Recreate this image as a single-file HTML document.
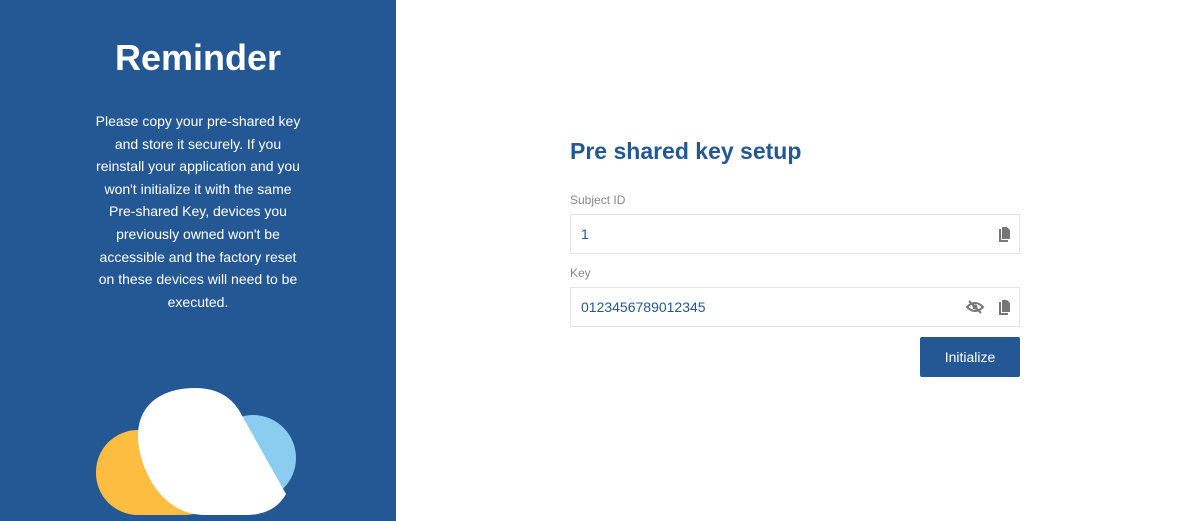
<!DOCTYPE html>
<html><head><style>
body{margin:0;width:1191px;height:521px;overflow:hidden;font-family:"Liberation Sans",sans-serif;background:#fff;position:relative}
.left{position:absolute;left:0;top:0;width:396px;height:521px;background:#245895;color:#fff;text-align:center}
h1{position:absolute;top:37px;left:0;width:396px;margin:0;font-size:36px;font-weight:bold}
.txt{position:absolute;top:110px;left:48px;width:300px;font-size:14px;line-height:22.6px;white-space:nowrap}
h2{position:absolute;left:570px;top:138px;margin:0;color:#245895;font-size:23px;font-weight:bold}
.lbl{position:absolute;left:570px;font-size:12px;color:#888}
.inp{position:absolute;left:570px;width:448px;height:38px;border:1px solid #e3e3e3;font-size:14px;color:#245895;line-height:38px;text-indent:10px;box-sizing:content-box}
.btn{position:absolute;left:920px;top:337px;width:100px;height:40px;background:#245895;color:#fff;font-size:14px;text-align:center;line-height:40px;border-radius:2px}
.ic{position:absolute;fill:#777}
</style></head><body>
<div class="left">
<h1>Reminder</h1>
<div class="txt">Please copy your pre-shared key<br>and store it securely. If you<br>reinstall your application and you<br>won't initialize it with the same<br>Pre-shared Key, devices you<br>previously owned won't be<br>accessible and the factory reset<br>on these devices will need to be<br>executed.</div>
<svg style="position:absolute;left:0;top:0" width="396" height="521">
<rect x="96" y="430" width="130" height="85" rx="42" fill="#fdbd40"/>
<circle cx="253" cy="458" r="43" fill="#8bcdf1"/>
<path d="M139 448 C132 405 162 388 195 388 C218 388 232 398 240 412 L286 494 C278 508 265 515 245 515 L205 515 C170 515 146 485 139 448 Z" fill="#fff"/>
</svg>
</div>
<h2>Pre shared key setup</h2>
<div class="lbl" style="top:193px">Subject ID</div>
<div class="inp" style="top:214px">1</div>
<div class="lbl" style="top:266px">Key</div>
<div class="inp" style="top:287px">0123456789012345</div>
<svg class="ic" style="left:996px;top:226px" width="16" height="16" viewBox="0 0 16 16"><path d="M3 3h2v11h7v2H3z"/><path d="M6 1h5l3 3v9H6z"/></svg>
<svg class="ic" style="left:996px;top:299px" width="16" height="16" viewBox="0 0 16 16"><path d="M3 3h2v11h7v2H3z"/><path d="M6 1h5l3 3v9H6z"/></svg>
<svg style="position:absolute;left:965px;top:299px" width="20" height="16" viewBox="0 0 20 16"><path d="M2 8 Q10 0 18 8 Q10 16 2 8Z" fill="none" stroke="#777" stroke-width="2"/><circle cx="10" cy="8" r="2.5" fill="#777"/><path d="M4 2 L16 14" stroke="#777" stroke-width="2"/></svg>
<div class="btn">Initialize</div>
</body></html>
